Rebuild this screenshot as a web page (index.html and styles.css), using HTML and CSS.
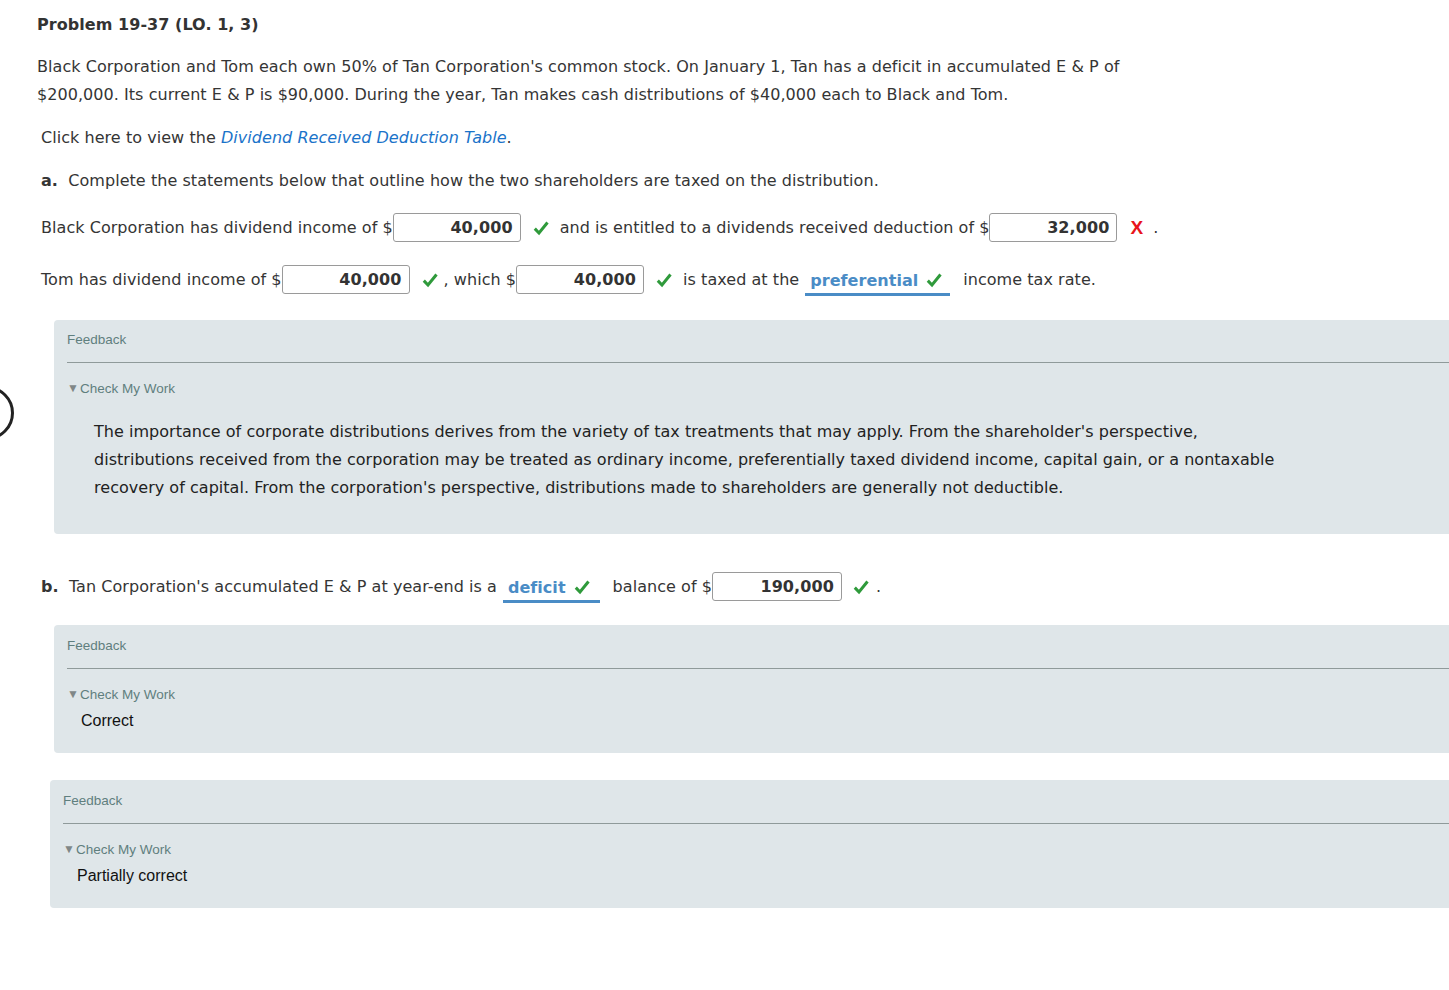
FILE: index.html
```html
<!DOCTYPE html>
<html>
<head>
<meta charset="utf-8">
<link rel="stylesheet" href="styles.css">
</head>
<body>
<div class="ring"></div>
<div class="page">
  <h1 class="title">Problem 19-37 (LO. 1, 3)</h1>
  <p class="intro">Black Corporation and Tom each own 50% of Tan Corporation's common stock. On January 1, Tan has a deficit in accumulated E &amp; P of<br>$200,000. Its current E &amp; P is $90,000. During the year, Tan makes cash distributions of $40,000 each to Black and Tom.</p>
  <p class="link-line">Click here to view the <a class="link">Dividend Received Deduction Table</a>.</p>
  <p class="part"><b>a.</b>&nbsp; Complete the statements below that outline how the two shareholders are taxed on the distribution.</p>

  <div class="row row1">
    <span>Black Corporation has dividend income of $</span><span class="inp">40,000</span><svg class="ok" viewBox="0 0 16 16"><path d="M1.8 8.6 L6 13 L14.5 2.5"/></svg>
    <span>and is entitled to a dividends received deduction of $</span><span class="inp">32,000</span><span class="bad">X</span><span class="dot">.</span>
  </div>
  <div class="row row2">
    <span>Tom has dividend income of $</span><span class="inp">40,000</span><svg class="ok ok-tight" viewBox="0 0 16 16"><path d="M1.8 8.6 L6 13 L14.5 2.5"/></svg><span>, which $</span><span class="inp">40,000</span><svg class="ok" viewBox="0 0 16 16"><path d="M1.8 8.6 L6 13 L14.5 2.5"/></svg>
    <span>is taxed at the</span><span class="sel sel-pref">preferential<svg class="ok-in" viewBox="0 0 16 16"><path d="M1.8 8.6 L6 13 L14.5 2.5"/></svg></span><span class="sp2">income tax rate.</span>
  </div>

  <div class="fb fb1">
    <div class="fb-label">Feedback</div>
    <div class="fb-rule"></div>
    <div class="fb-check"><span class="tri">▼</span>Check My Work</div>
    <p class="fb-text">The importance of corporate distributions derives from the variety of tax treatments that may apply. From the shareholder's perspective,<br>distributions received from the corporation may be treated as ordinary income, preferentially taxed dividend income, capital gain, or a nontaxable<br>recovery of capital. From the corporation's perspective, distributions made to shareholders are generally not deductible.</p>
  </div>

  <div class="row rowb">
    <span><b>b.</b>&nbsp; Tan Corporation's accumulated E &amp; P at year-end is a</span><span class="sel sel-def">deficit<svg class="ok-in" viewBox="0 0 16 16"><path d="M1.8 8.6 L6 13 L14.5 2.5"/></svg></span><span class="sp2">balance of $</span><span class="inp inp-wide">190,000</span><svg class="ok" viewBox="0 0 16 16"><path d="M1.8 8.6 L6 13 L14.5 2.5"/></svg><span class="dot">.</span>
  </div>

  <div class="fb fb2">
    <div class="fb-label">Feedback</div>
    <div class="fb-rule"></div>
    <div class="fb-check"><span class="tri">▼</span>Check My Work</div>
    <div class="fb-result">Correct</div>
  </div>

  <div class="fb fb3">
    <div class="fb-label">Feedback</div>
    <div class="fb-rule"></div>
    <div class="fb-check"><span class="tri">▼</span>Check My Work</div>
    <div class="fb-result">Partially correct</div>
  </div>
</div>
</body>
</html>
```
FILE: styles.css
```css
html, body {
  margin: 0;
  padding: 0;
  background: #fff;
  overflow: hidden;
}
body {
  font-family: "DejaVu Sans", Verdana, sans-serif;
  font-size: 16px;
  letter-spacing: 0.05px;
  color: #353535;
  width: 1449px;
  height: 990px;
  position: relative;
}
.ring {
  position: absolute;
  left: -40px;
  top: 386px;
  width: 48px;
  height: 48px;
  border: 3px solid #222;
  border-radius: 50%;
}
.page {
  padding: 13px 0 0 37px;
}
.title {
  font-size: 16px;
  font-weight: bold;
  margin: 0;
  line-height: 24px;
  color: #333;
}
.intro {
  margin: 16px 0 0 0;
  line-height: 28px;
}
.link-line {
  margin: 15px 0 0 4px;
  line-height: 28px;
}
.link {
  color: #1a73c9;
  font-style: italic;
}
.part {
  margin: 15px 0 0 4px;
  line-height: 28px;
}
.row {
  display: flex;
  align-items: center;
  margin-left: 4px;
  white-space: nowrap;
  height: 29px;
}
.row1 { margin-top: 18px; }
.row2 { margin-top: 23px; }
.inp {
  box-sizing: border-box;
  width: 128px;
  height: 29px;
  border: 1px solid #9a9a9a;
  border-radius: 3px;
  text-align: right;
  padding-right: 7px;
  font-weight: bold;
  font-size: 16px;
  line-height: 27px;
  color: #333;
  font-family: "DejaVu Sans", Verdana, sans-serif;
  letter-spacing: 0.1px;
  flex: none;
}
.inp-wide { width: 130px; }
.ok {
  width: 16px;
  height: 16px;
  margin: 0 11px 0 12px;
  fill: none;
  stroke: #2f9a3b;
  stroke-width: 3;
  stroke-linecap: butt;
  flex: none;
}
.ok-tight { margin-right: 6px; }
.ok-in {
  width: 16px;
  height: 16px;
  margin-left: 8px;
  fill: none;
  stroke: #2f9a3b;
  stroke-width: 3;
  vertical-align: -2px;
}
.bad {
  color: #e8141b;
  font-weight: bold;
  font-size: 19px;
  margin: 0 10px 0 13px;
  font-family: "Liberation Sans", Arial, sans-serif;
}
.dot { margin-left: 0; }
.sel {
  color: #4a8cc6;
  font-weight: bold;
  font-size: 16px;
  border-bottom: 3px solid #4a8cc6;
  padding: 2px 10px 0 5px;
  margin-left: 6px;
  line-height: 24px;
  align-self: flex-end;
  margin-bottom: -2px;
}
.sel-pref { width: 130px; }
.sp2 { margin-left: 13px; }
.fb {
  background: #dfe6e9;
  border-radius: 4px 0 0 4px;
  margin-right: -40px;
}
.fb1 {
  margin: 26px 0 0 17px;
  padding: 9px 0 32px 13px;
}
.fb-label {
  font-family: "Liberation Sans", Arial, sans-serif;
  font-size: 13.5px;
  color: #5f7f7e;
  line-height: 22px;
  letter-spacing: 0;
}
.fb-rule {
  height: 1px;
  background: #8f9a9a;
  margin-top: 11px;
}
.fb-check {
  font-family: "Liberation Sans", Arial, sans-serif;
  font-size: 13.5px;
  color: #5f7f7e;
  line-height: 22px;
  margin-top: 14px;
  letter-spacing: 0;
}
.tri {
  font-size: 12px;
  color: #808787;
  vertical-align: 1px;
  margin-right: 1px;
}
.fb-text {
  margin: 18px 0 0 27px;
  line-height: 28px;
  font-size: 16px;
  color: #222;
  letter-spacing: 0.03px;
}
.rowb { margin-top: 38px; }
.rowb .ok { margin: 0 7px 0 11px; }
.fb2 {
  margin: 24px 0 0 17px;
  padding: 10px 0 19px 13px;
}
.fb-result {
  font-family: "Liberation Sans", Arial, sans-serif;
  font-size: 16px;
  color: #111;
  line-height: 26px;
  margin-left: 14px;
  margin-top: 2px;
  letter-spacing: 0;
}
.fb3 {
  margin: 27px 0 0 13px;
  padding: 10px 0 19px 13px;
}
```
